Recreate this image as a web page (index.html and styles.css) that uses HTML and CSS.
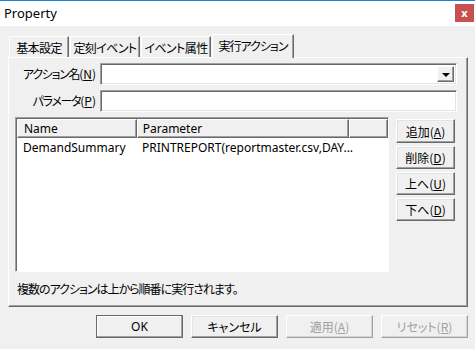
FILE: index.html
```html
<!DOCTYPE html>
<html lang="ja">
  <head>
    <meta charset="UTF-8" />
    <title>Property</title>
    <link rel="stylesheet" href="styles.css">
  </head>
  <body>
    <div class="titlebar">
      <span class="title">Property</span>
      <span class="close">x</span>
    </div>

    <div class="tabs">
      <span class="tab t1">基本設定</span>
      <span class="tab t2">定刻イベント</span>
      <span class="tab t3">イベント属性</span>
      <span class="tab t4 active">実行アクション</span>
    </div>

    <div class="panel">
      <div class="field">
        <label>アクション名<span class="key">(<u>N</u>)</span></label>
        <div class="box combo"><span class="drop"><i></i></span></div>
      </div>
      <div class="field">
        <label>パラメータ<span class="key">(<u>P</u>)</span></label>
        <div class="box"></div>
      </div>

      <div class="listarea">
        <div class="list">
          <div class="row head">
            <span class="c1">Name</span>
            <span class="c2">Parameter</span>
            <span class="c3"></span>
          </div>
          <div class="row">
            <span class="c1">DemandSummary</span>
            <span class="c2">PRINTREPORT(reportmaster.csv,DAY...</span>
          </div>
        </div>
        <div class="side">
          <button class="btn">追加(<u>A</u>)</button>
          <button class="btn">削除(<u>D</u>)</button>
          <button class="btn">上へ(<u>U</u>)</button>
          <button class="btn">下へ(<u>D</u>)</button>
        </div>
      </div>

      <p class="note">複数のアクションは上から順番に実行されます。</p>
    </div>

    <div class="actions">
      <button class="btn wide default">OK</button>
      <button class="btn wide">キャンセル</button>
      <button class="btn wide off">適用(<u>A</u>)</button>
      <button class="btn wide off">リセット(<u>R</u>)</button>
    </div>
  </body>
</html>
```

FILE: styles.css
```css
body {
  margin: 0;
  width: 475px;
  height: 349px;
  background: #f0f0f0;
  font-family: "Noto Sans", "Noto Sans CJK JP", sans-serif;
  font-size: 12px;
  line-height: 16px;
  color: #000;
  overflow: hidden;
}
u {
  text-decoration: underline;
  text-underline-offset: 1px;
}
.tab,
.field label,
.btn,
.note {
  font-family: "Noto Sans CJK JP", sans-serif;
  font-feature-settings: "palt";
  white-space: nowrap;
}

/* title bar */
.titlebar {
  height: 25px;
  border-top: 1px solid #1883d7;
  background: #fff;
  display: flex;
  justify-content: space-between;
  align-items: flex-start;
}
.title {
  font-size: 13px;
  margin: 4px 0 0 4px;
}
.close {
  width: 19px;
  height: 18px;
  margin: 3px 1px 0 0;
  background: #c75050;
  color: #fff;
  font-weight: bold;
  font-size: 11px;
  line-height: 17px;
  text-align: center;
}

/* tabs */
.tabs {
  display: flex;
  align-items: flex-end;
  height: 31px;
  padding-left: 9px;
}
.tab {
  box-sizing: border-box;
  height: 21px;
  line-height: 21px;
  text-align: center;
  letter-spacing: -0.6px;
  margin-right: 1px;
  border: 1px solid;
  border-bottom: 0;
  border-color: #fff #696969 transparent #fff;
  box-shadow: inset -1px 0 #a0a0a0;
  font-size: 12px;
}
.t1 { width: 60px; }
.t2 { width: 70px; }
.t3 { width: 70px; }
.t4 { width: 82px; letter-spacing: -1px; }
.tab.active {
  height: 24px;
  line-height: 22px;
  margin-bottom: -1px;
  background: #f0f0f0;
  position: relative;
  z-index: 1;
}

/* panel */
.panel {
  margin-left: 8px;
  width: 460px;
  height: 250px;
  box-sizing: border-box;
  border: 1px solid;
  border-color: #fff #696969 #696969 #fff;
  box-shadow: inset -1px -1px #a0a0a0;
  padding: 5px 0 0 6px;
}
.field {
  display: grid;
  grid-template-columns: 81px 357px;
  column-gap: 4px;
  align-items: center;
  margin-bottom: 5px;
}
.field label {
  text-align: right;
  letter-spacing: -1.3px;
}
.field .key {
  letter-spacing: 0;
}
.box {
  height: 22px;
  box-sizing: border-box;
  background: #fff;
  border: 1px solid;
  border-color: #a0a0a0 #fff #fff #a0a0a0;
  box-shadow: inset 1px 1px #696969, inset -1px -1px #e3e3e3;
  display: flex;
  justify-content: flex-end;
  align-items: center;
  padding-right: 2px;
}
.drop {
  width: 17px;
  height: 16px;
  box-sizing: border-box;
  background: #f0f0f0;
  border: 1px solid;
  border-color: #fff #696969 #696969 #fff;
  box-shadow: inset -1px -1px #a0a0a0;
  display: flex;
  justify-content: center;
  align-items: center;
}
.drop i {
  border: 4px solid transparent;
  border-top: 4px solid #000;
  border-bottom: 0;
  margin-top: 1px;
}

/* list view */
.listarea {
  display: flex;
  gap: 7px;
  margin-top: 5px;
}
.list {
  width: 374px;
  height: 155px;
  box-sizing: border-box;
  background: #fff;
  border: 1px solid;
  border-color: #a0a0a0 #fff #fff #a0a0a0;
  box-shadow: inset 1px 1px #696969;
  padding: 1px 0 0 1px;
}
.row {
  display: flex;
  height: 18px;
  line-height: 18px;
}
.row.head {
  height: 19px;
  line-height: 17px;
  background: #f0f0f0;
  margin-bottom: 1px;
}
.row span {
  box-sizing: border-box;
  white-space: nowrap;
  overflow: hidden;
}
.c1 {
  width: 120px;
  padding-left: 6px;
}
.c2 {
  width: 213px;
  padding-left: 5px;
}
.c3 {
  width: 39px;
}
.row .c2 {
  overflow: visible;
}
.head span {
  border: 1px solid;
  border-color: #fff #696969 #696969 #fff;
  box-shadow: inset -1px -1px #a0a0a0;
}
.side {
  display: flex;
  flex-direction: column;
  gap: 3px;
  padding-top: 2px;
}

/* buttons */
.btn {
  width: 59px;
  height: 23px;
  padding: 0;
  background: #f0f0f0;
  border: 1px solid;
  border-color: #fff #696969 #696969 #fff;
  box-shadow: inset -1px -1px #a0a0a0, inset 1px 1px #e3e3e3;
  font-size: 12px;
  color: #000;
}
.side .btn:first-child {
  height: 24px;
}
.btn.wide {
  width: 87px;
}
.btn.default {
  font-family: "Noto Sans", sans-serif;
  border-color: #696969;
  box-shadow: inset -1px -1px #a0a0a0, inset 1px 1px #fff;
}
.btn.off {
  color: #a0a0a0;
  border-color: #fff #a0a0a0 #a0a0a0 #fff;
  box-shadow: inset -1px -1px #d4d4d4;
}

.note {
  margin: 9px 0 0 2px;
  letter-spacing: -1px;
}

.actions {
  display: flex;
  justify-content: flex-end;
  gap: 8px;
  padding: 8px 7px 0 0;
}
```
